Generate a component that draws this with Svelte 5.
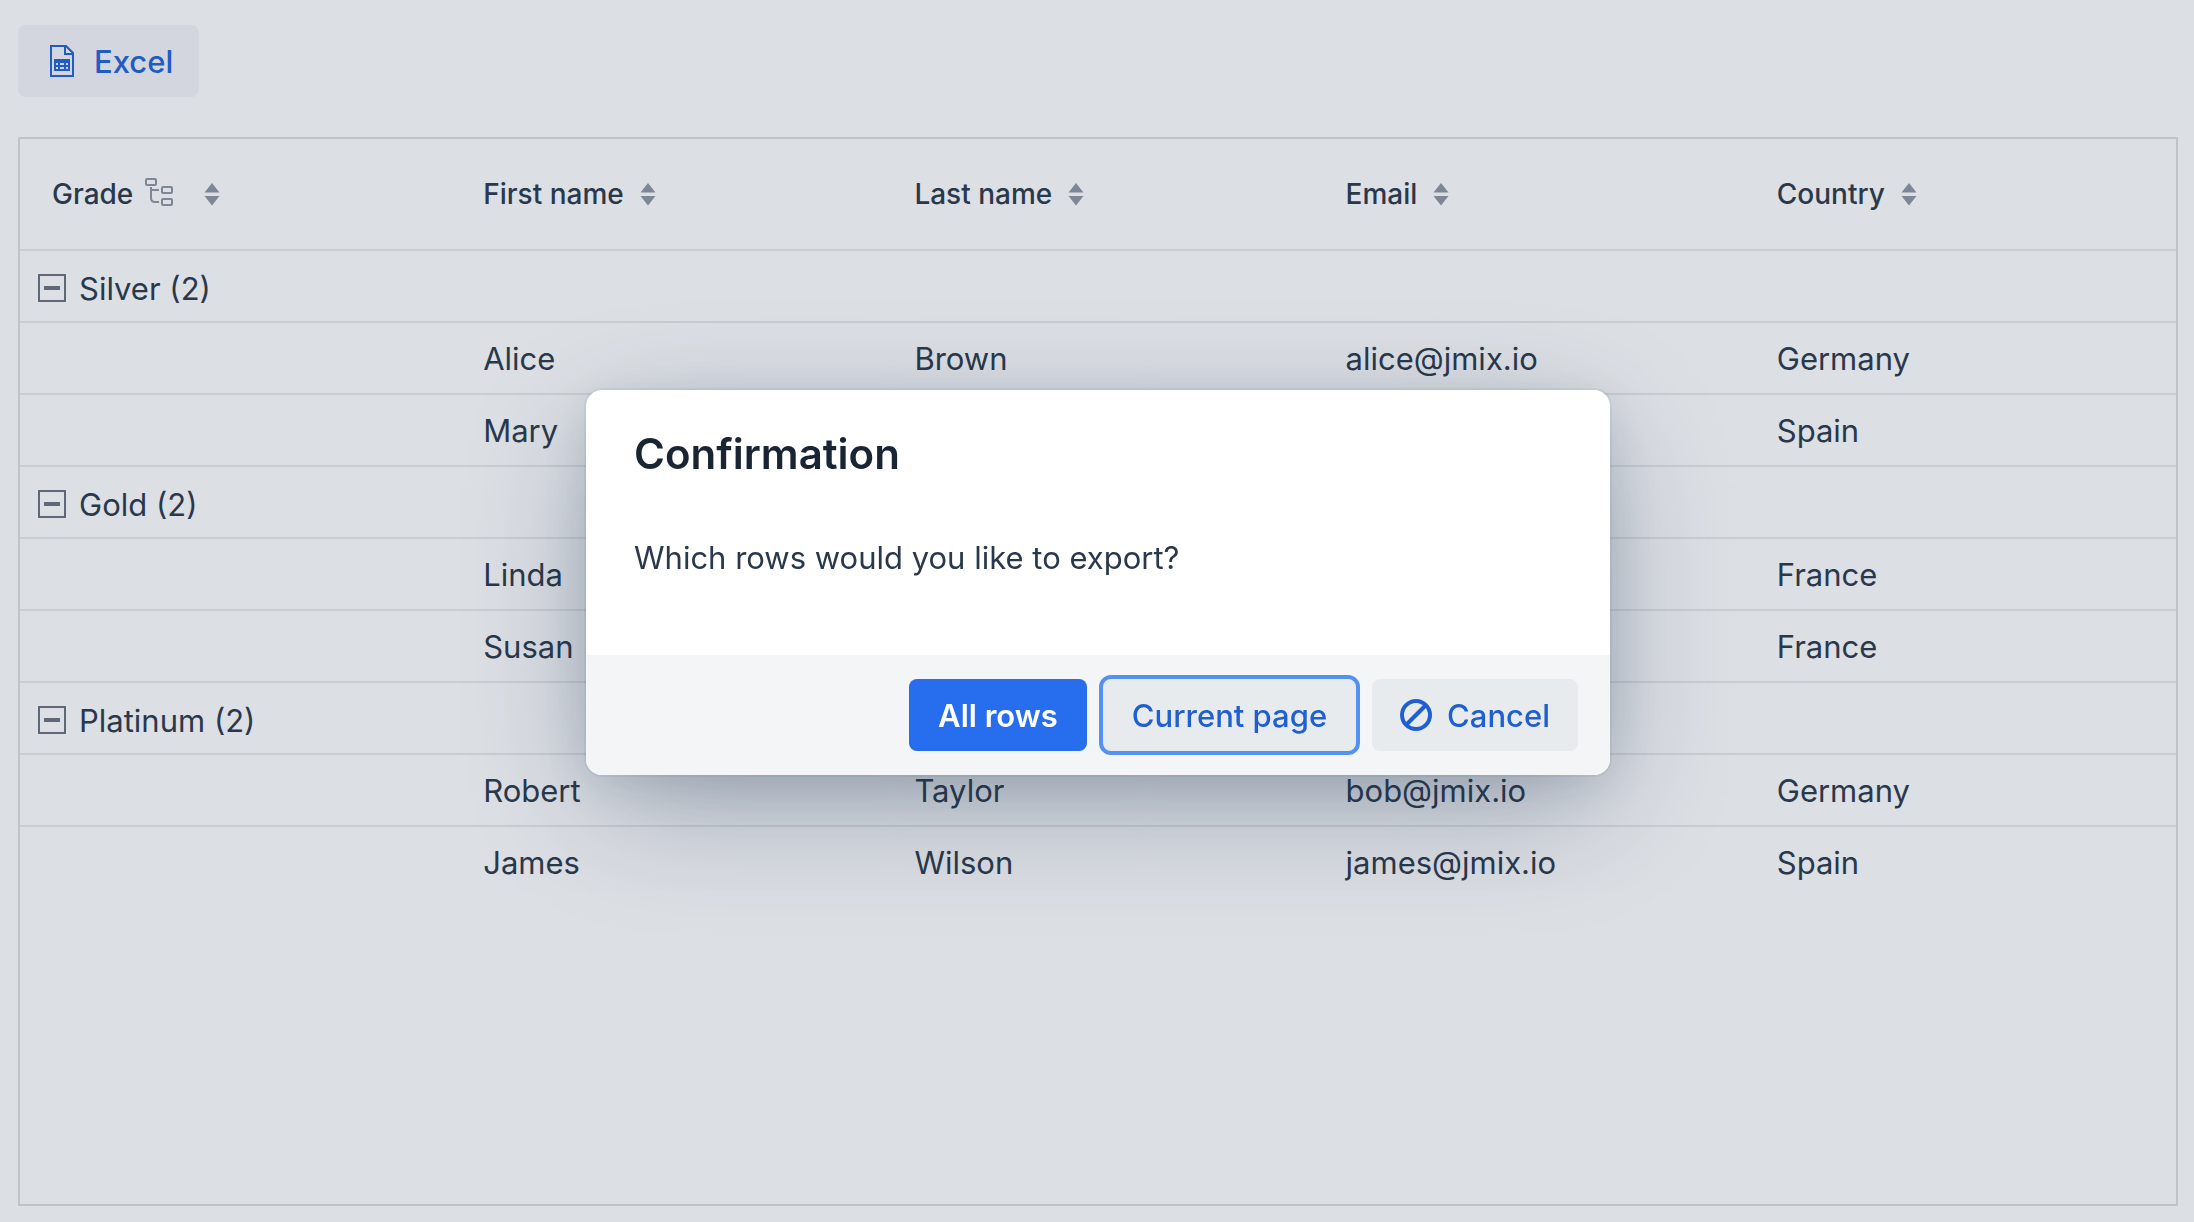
<script lang="ts">
	interface Customer {
		firstName: string;
		lastName: string;
		email: string;
		country: string;
	}

	interface Group {
		grade: string;
		rows: Customer[];
	}

	const columns = ['First name', 'Last name', 'Email', 'Country'];

	const groups: Group[] = [
		{
			grade: 'Silver',
			rows: [
				{ firstName: 'Alice', lastName: 'Brown', email: 'alice@jmix.io', country: 'Germany' },
				{ firstName: 'Mary', lastName: '', email: '', country: 'Spain' }
			]
		},
		{
			grade: 'Gold',
			rows: [
				{ firstName: 'Linda', lastName: '', email: '', country: 'France' },
				{ firstName: 'Susan', lastName: '', email: '', country: 'France' }
			]
		},
		{
			grade: 'Platinum',
			rows: [
				{ firstName: 'Robert', lastName: 'Taylor', email: 'bob@jmix.io', country: 'Germany' },
				{ firstName: 'James', lastName: 'Wilson', email: 'james@jmix.io', country: 'Spain' }
			]
		}
	];

	let collapsed: Record<string, boolean> = $state({});
	let dialogOpen = $state(true);

	function toggle(grade: string) {
		collapsed[grade] = !collapsed[grade];
	}

	function closeDialog() {
		dialogOpen = false;
	}
</script>

{#snippet sorter()}
	<svg class="sorter" viewBox="0 0 16 24" aria-hidden="true">
		<path d="M8 1 15.5 10.5H.5zM8 23.500 .5 14h15z" fill="currentColor" />
	</svg>
{/snippet}

<main class="view">
	<div class="toolbar">
		<button class="button excel" onclick={() => (dialogOpen = true)}>
			<svg class="file-icon" viewBox="0 0 24 32" aria-hidden="true">
				<path d="M1 1h15l7 7v23H1z" fill="none" stroke="currentColor" stroke-width="2" />
				<path d="M15 1v8h8" fill="none" stroke="currentColor" stroke-width="2" />
				<path
					fill="currentColor"
					fill-rule="evenodd"
					d="M4 14h16v12H4zM6 18v2h2v-2zM10 18v2h4v-2zM16 18v2h2v-2zM6 22v2h2v-2zM10 22v2h4v-2zM16 22v2h2v-2z"
				/>
			</svg>
			Excel
		</button>
	</div>

	<div class="grid">
		<table>
			<thead>
				<tr>
					<th>
						<span class="head">
							<span class="grade">
								Grade
								<svg class="tree-icon" viewBox="0 0 30 30" aria-hidden="true">
									<g fill="none" stroke="currentColor" stroke-width="2">
										<rect x="2" y="2" width="10" height="6" rx="1" />
										<rect x="18" y="10" width="10" height="6" rx="1" />
										<rect x="18" y="22" width="10" height="6" rx="1" />
										<path d="M7 10v11q0 4 4 4h4M7 13h8" />
									</g>
								</svg>
							</span>
							{@render sorter()}
						</span>
					</th>
					{#each columns as column}
						<th><span class="head">{column}{@render sorter()}</span></th>
					{/each}
				</tr>
			</thead>
			<tbody>
				{#each groups as group}
					<tr>
						<td class="group" colspan="5">
							<button class="toggle" aria-expanded={!collapsed[group.grade]} onclick={() => toggle(group.grade)}>
								<svg class="toggle-icon" viewBox="0 0 28 28" aria-hidden="true">
									<rect x="1" y="1" width="26" height="26" fill="none" stroke="currentColor" stroke-width="2" />
									<path d="M6 14h16" stroke="currentColor" stroke-width="4" />
									{#if collapsed[group.grade]}
										<path d="M14 6v16" stroke="currentColor" stroke-width="4" />
									{/if}
								</svg>
								{group.grade} ({group.rows.length})
							</button>
						</td>
					</tr>
					{#if !collapsed[group.grade]}
						{#each group.rows as row}
							<tr>
								<td></td>
								<td>{row.firstName}</td>
								<td>{row.lastName}</td>
								<td>{row.email}</td>
								<td>{row.country}</td>
							</tr>
						{/each}
					{/if}
				{/each}
			</tbody>
		</table>
	</div>
</main>

{#if dialogOpen}
	<div class="overlay">
		<div class="dialog" role="dialog" aria-modal="true" aria-labelledby="dialog-title">
			<div class="content">
				<h2 id="dialog-title">Confirmation</h2>
				<p>Which rows would you like to export?</p>
			</div>
			<footer>
				<button class="button primary" onclick={closeDialog}>All rows</button>
				<button class="button focused" onclick={closeDialog}>Current page</button>
				<button class="button cancel" onclick={closeDialog}>
					<svg class="ban-icon" viewBox="0 0 32 32" aria-hidden="true">
						<circle cx="16" cy="16" r="14" fill="none" stroke="currentColor" stroke-width="4" />
						<path d="M6 26 26 6" stroke="currentColor" stroke-width="4" />
					</svg>
					Cancel
				</button>
			</footer>
		</div>
	</div>
{/if}

<style>
	:global(body) {
		background: #dcdfe4;
		color: #2a384b;
		font-family: Inter, 'Liberation Sans', sans-serif;
		font-size: 31px;
	}

	.view {
		display: flex;
		flex-direction: column;
		gap: 40px;
		box-sizing: border-box;
		min-height: 100vh;
		padding: 25px 16px 16px 18px;
	}

	.toolbar {
		display: flex;
	}

	.button {
		display: inline-flex;
		align-items: center;
		height: 72px;
		padding: 0 29px;
		border: 0;
		border-radius: 8px;
		background: #e8ebee;
		color: #1f5fd0;
		font: inherit;
		font-weight: 500;
		white-space: nowrap;
		cursor: pointer;
	}

	.excel {
		gap: 20px;
		padding: 0 26px 0 32px;
		background: #d3d6de;
		color: #215bc4;
	}

	.file-icon {
		width: 24px;
		height: 32px;
	}

	.grid {
		flex: 1;
		border: 2px solid #bdc4cc;
	}

	table {
		width: 100%;
		border-collapse: separate;
		border-spacing: 0;
		table-layout: fixed;
	}

	th,
	td {
		box-sizing: border-box;
		padding: 0 32px;
		text-align: left;
	}

	th {
		height: 110px;
		font-size: 28px;
		font-weight: 500;
	}

	td {
		height: 72px;
		border-top: 2px solid #c9cdd3;
	}

	.head {
		display: flex;
		align-items: center;
		gap: 16px;
	}

	.grade {
		display: flex;
		align-items: center;
		gap: 11px;
	}

	.tree-icon {
		width: 30px;
		height: 30px;
		margin: 0 14px 4px 0;
		color: #7e8796;
	}

	.sorter {
		width: 16px;
		height: 24px;
		color: #7e8796;
	}

	.group {
		padding: 4px 18px 0;
	}

	.toggle {
		display: flex;
		align-items: center;
		gap: 13px;
		padding: 0;
		border: 0;
		background: none;
		color: inherit;
		font: inherit;
		cursor: pointer;
	}

	.toggle-icon {
		width: 28px;
		height: 28px;
		color: #5d687b;
	}

	.overlay {
		position: fixed;
		inset: 0;
		display: flex;
		align-items: center;
		justify-content: center;
		padding: 0 0 57px 2px;
	}

	.dialog {
		width: 1024px;
		max-width: 90%;
		border-radius: 16px;
		background: #fff;
		box-shadow:
			0 0 0 2px hsla(214, 61%, 25%, 0.05),
			0 8px 48px -6px hsla(214, 53%, 23%, 0.16),
			0 36px 128px -16px hsla(214, 47%, 21%, 0.38);
		overflow: hidden;
	}

	.content {
		padding: 32px 48px 73px;
	}

	h2 {
		margin: 0;
		color: #1a2533;
		font-size: 42px;
		font-weight: 600;
		line-height: 64px;
	}

	p {
		margin: 48px 0 0;
		line-height: 48px;
	}

	footer {
		display: flex;
		justify-content: flex-end;
		gap: 16px;
		padding: 24px 32px;
		background: #f3f5f7;
	}

	.primary {
		background: #276eee;
		color: #fff;
		font-weight: 600;
	}

	.focused {
		outline: 4px solid #5391f3;
	}

	.cancel {
		gap: 15px;
		padding: 0 28px;
	}

	.ban-icon {
		width: 32px;
		height: 32px;
	}
</style>
